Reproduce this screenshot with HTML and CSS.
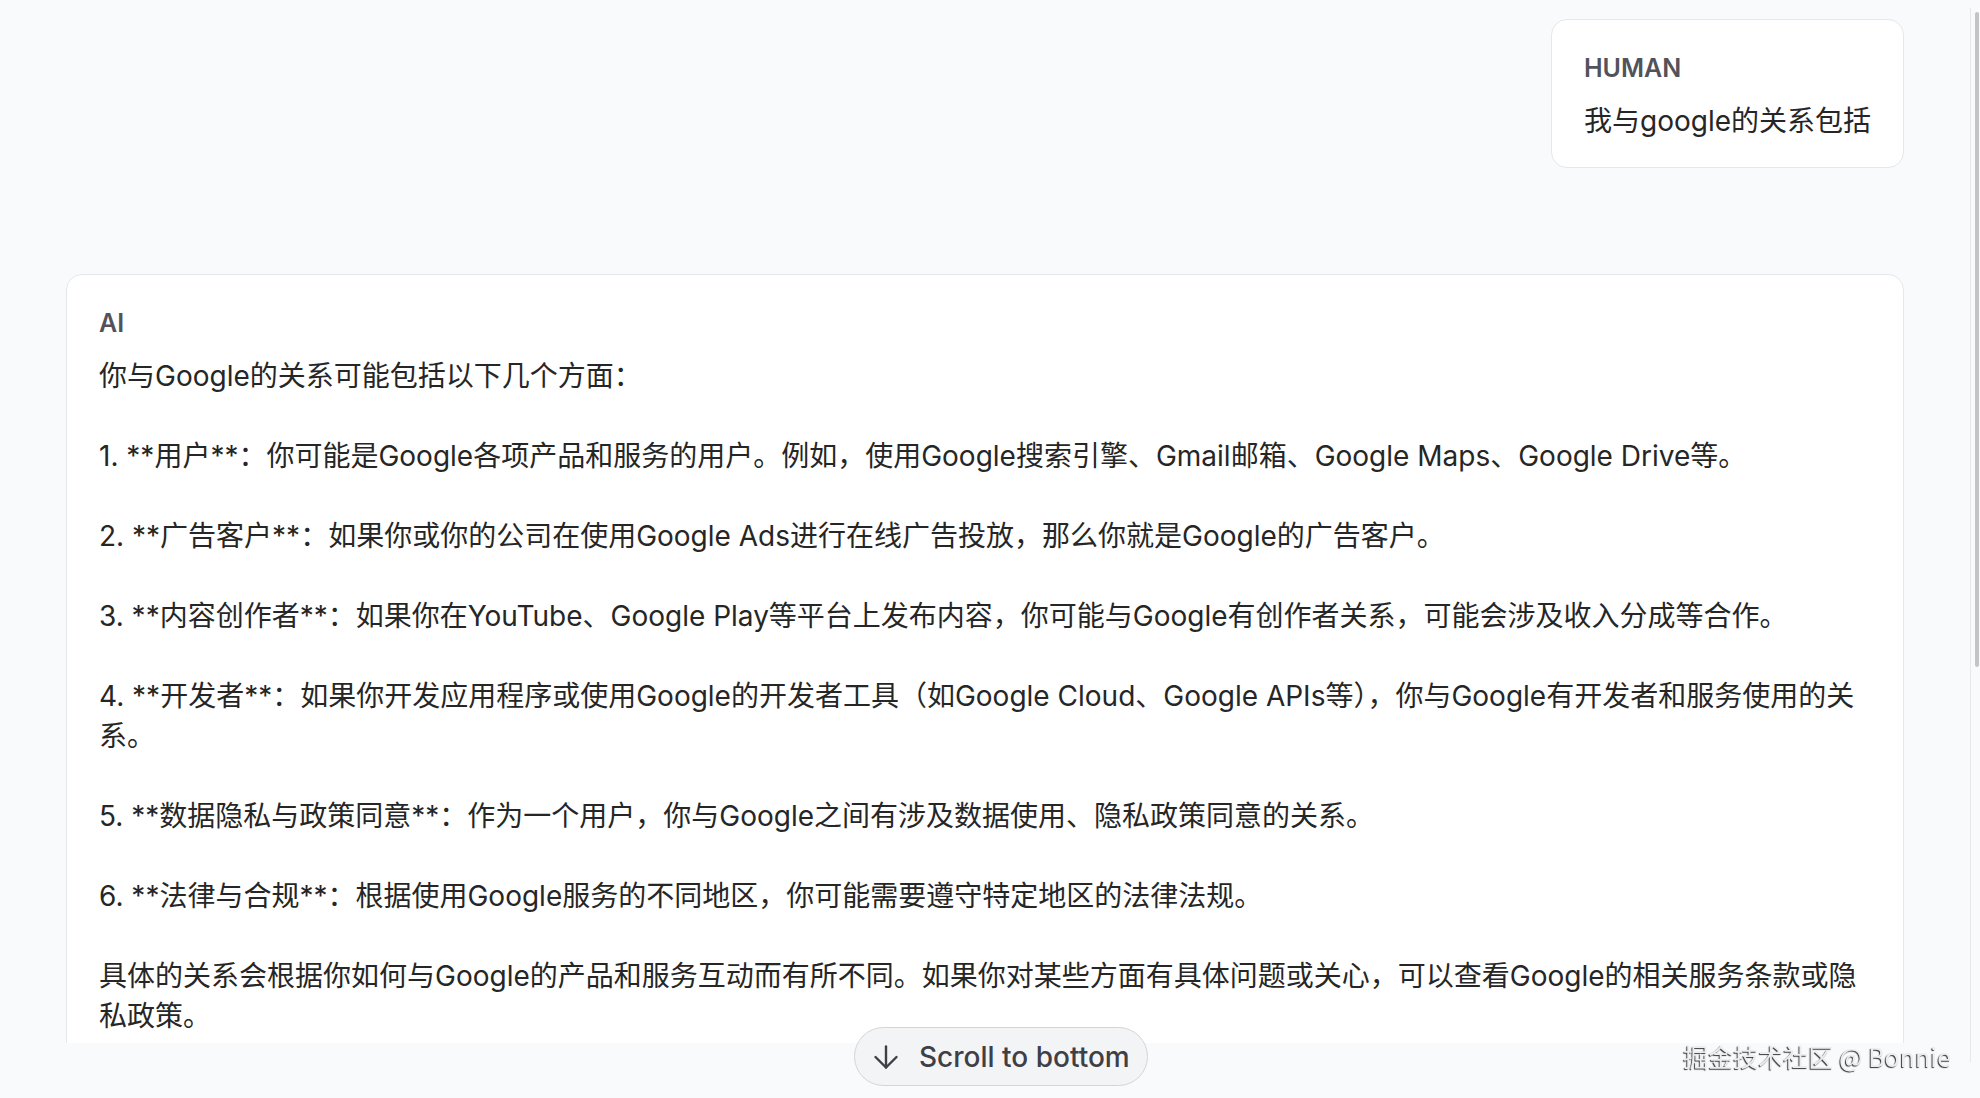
FILE: index.html
```html
<!DOCTYPE html>
<html>
  <head>
    <meta charset="utf-8" />
    <link rel="stylesheet" href="styles.css">
  </head>
  <body>
    <div class="chat">
      <div class="msg human">
        <div class="label">HUMAN</div>
        <p>我与google的关系包括</p>
      </div>
      <div class="msg ai">
        <div class="label">AI</div>
        <p>你与Google的关系可能包括以下几个方面：</p>
        <p>1. **用户**：你可能是Google各项产品和服务的用户。例如，使用Google搜索引擎、Gmail邮箱、Google Maps、Google Drive等。</p>
        <p>2. **广告客户**：如果你或你的公司在使用Google Ads进行在线广告投放，那么你就是Google的广告客户。</p>
        <p>3. **内容创作者**：如果你在YouTube、Google Play等平台上发布内容，你可能与Google有创作者关系，可能会涉及收入分成等合作。</p>
        <p>4. **开发者**：如果你开发应用程序或使用Google的开发者工具（如Google Cloud、Google APIs等），你与Google有开发者和服务使用的关系。</p>
        <p>5. **数据隐私与政策同意**：作为一个用户，你与Google之间有涉及数据使用、隐私政策同意的关系。</p>
        <p>6. **法律与合规**：根据使用Google服务的不同地区，你可能需要遵守特定地区的法律法规。</p>
        <p>具体的关系会根据你如何与Google的产品和服务互动而有所不同。如果你对某些方面有具体问题或关心，可以查看Google的相关服务条款或隐私政策。</p>
      </div>
    </div>

    <div class="footer"></div>

    <button class="scroll-btn">
      <svg width="36" height="36" viewBox="0 0 24 24" fill="none" stroke="currentColor" stroke-width="1.6" stroke-linecap="round" stroke-linejoin="round">
        <path d="M12 5v14"/>
        <path d="m19 12-7 7-7-7"/>
      </svg>
      Scroll to bottom
    </button>

    <div class="watermark">掘金技术社区 @ Bonnie</div>

    <div class="scroll-track"></div>
    <div class="scroll-thumb"></div>
  </body>
</html>
```

FILE: styles.css
```css
*{
  box-sizing: border-box;
}
body{
  margin: 0px;
  background: #f9fafb;
  color: #262626;
  font-family: Inter, "Noto Sans CJK SC", sans-serif;
  font-size: 28px;
  line-height: 40px;
  height: 100vh;
  overflow: hidden;
}
.chat{
  display: flex;
  flex-direction: column;
  gap: 106px;
  padding: 19px 76px 0px 66px;
}
.msg{
  background: #fff;
  border: 1px solid #e5e7eb;
  border-radius: 16px;
  padding: 28px 32px 26px 32px;
}
.msg p{
  margin: 0px;
}
.human{
  align-self: flex-end;
}
.ai p{
  margin-bottom: 40px;
}
.label{
  font-size: 25px;
  font-weight: 600;
  color: #52525b;
  margin-bottom: 13px;
}
.footer{
  position: fixed;
  left: 0px;
  right: 0px;
  bottom: 0px;
  height: 55px;
  background: #f9fafb;
}
.scroll-btn{
  position: fixed;
  left: 854px;
  top: 1027px;
  height: 59px;
  display: flex;
  align-items: center;
  gap: 15px;
  padding: 0px 17px 0px 13px;
  background: #f3f4f6;
  border: 1px solid #d4d4d8;
  border-radius: 30px;
  color: #3f3f46;
  font-family: Inter, sans-serif;
  font-size: 28px;
  font-weight: 500;
}
.watermark{
  position: fixed;
  right: 29px;
  top: 1040px;
  font-size: 25px;
  line-height: 32px;
  color: #eeeeee;
  text-shadow: -1px 1px 1px rgba(0, 0, 0, 0.8);
  font-family: "Noto Sans CJK SC", sans-serif;
}
.scroll-track{
  position: fixed;
  left: 1970px;
  top: 8px;
  width: 1px;
  height: 1054px;
  background: #e8e8ea;
}
.scroll-thumb{
  position: fixed;
  left: 1975px;
  top: 12px;
  width: 4px;
  height: 655px;
  border-radius: 2px;
  background: #c4c4c4;
}
```
